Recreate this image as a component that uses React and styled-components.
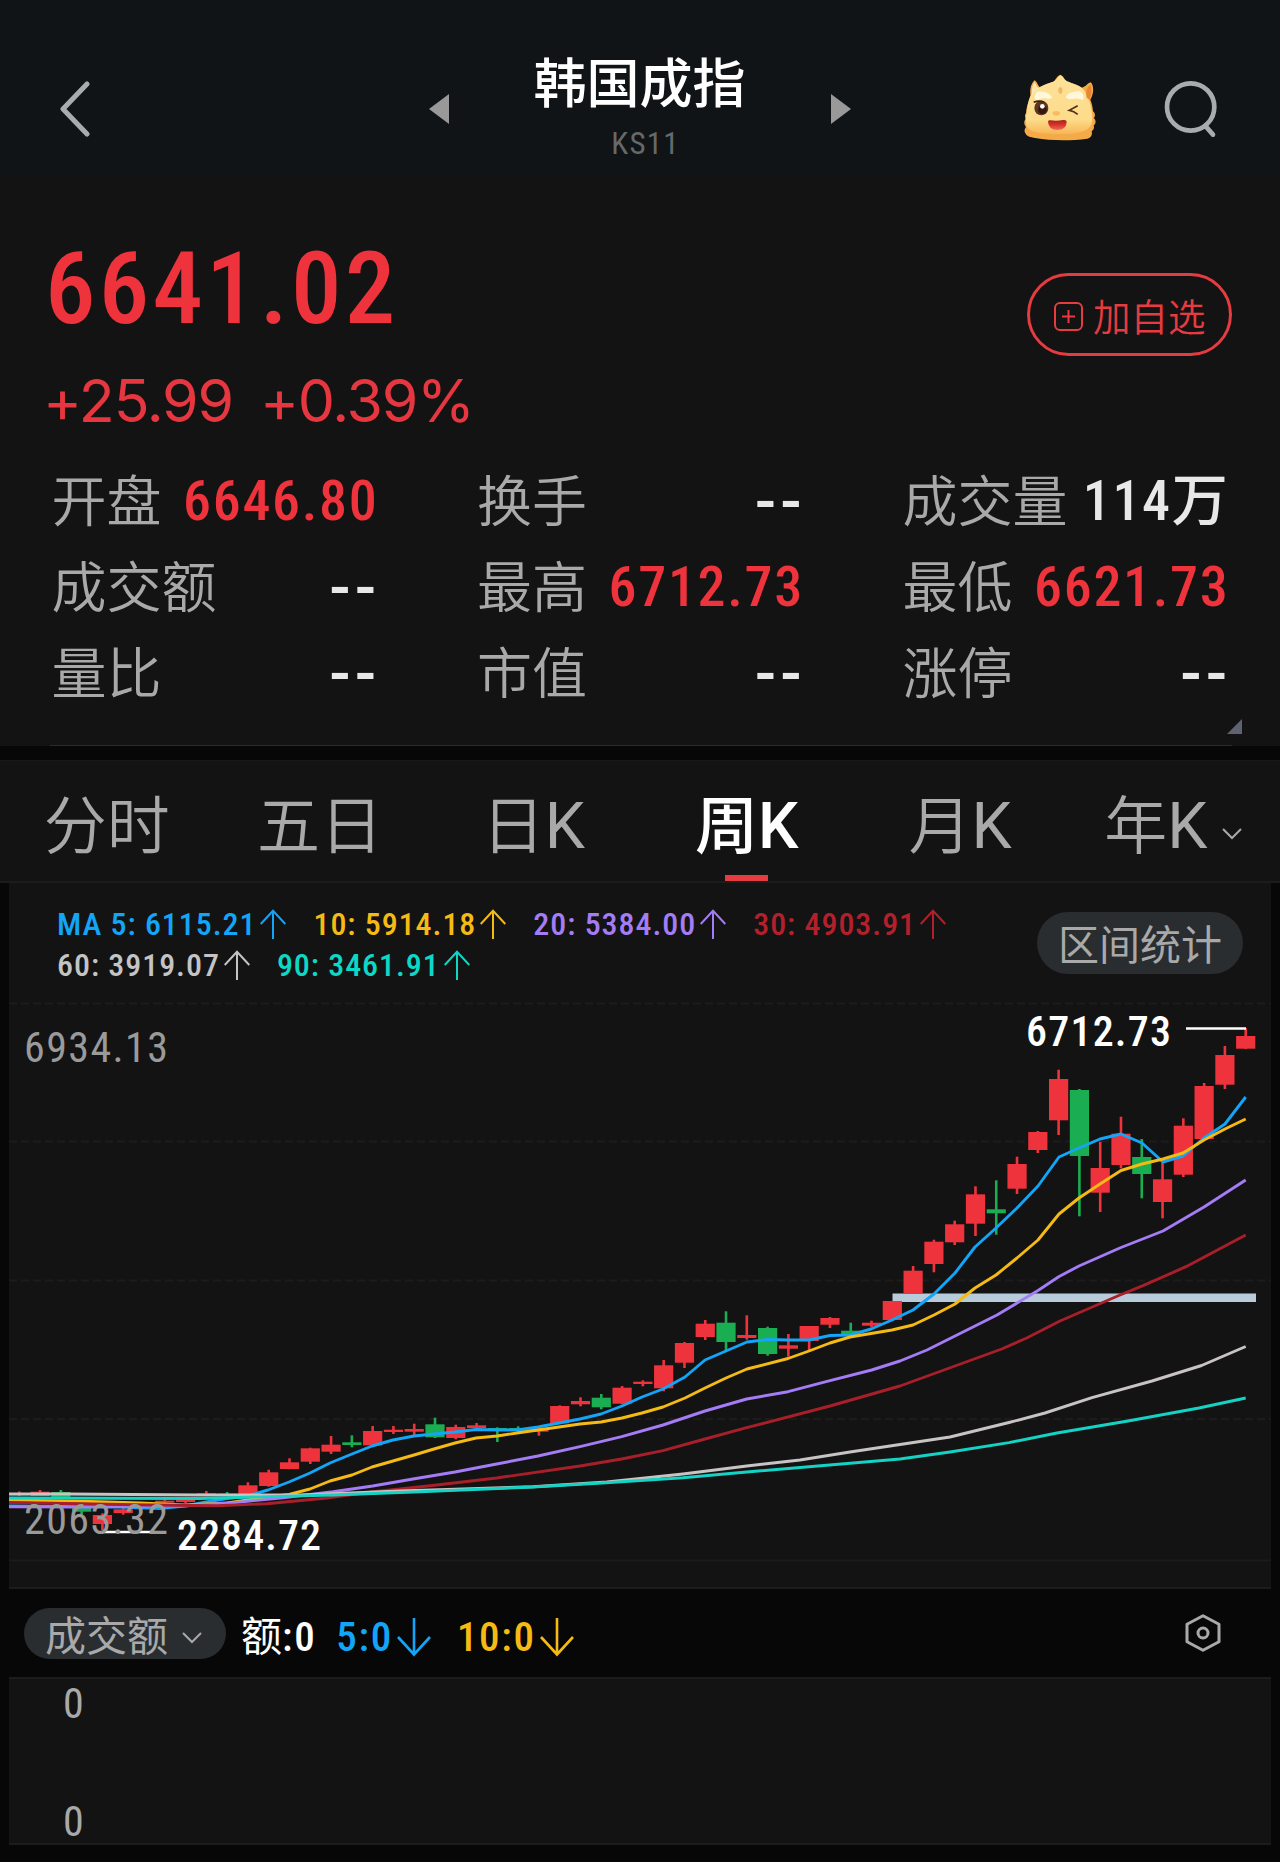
import React, { useState } from 'react';
import styled, { createGlobalStyle } from 'styled-components';

const quotes = [
  { label: '开盘', value: '6646.80', up: true },
  { label: '换手', value: '--' },
  { label: '成交量', value: '114万' },
  { label: '成交额', value: '--' },
  { label: '最高', value: '6712.73', up: true },
  { label: '最低', value: '6621.73', up: true },
  { label: '量比', value: '--' },
  { label: '市值', value: '--' },
  { label: '涨停', value: '--' },
];

const tabs = ['分时', '五日', '日K', '周K', '月K', '年K'];

const averages = [
  [
    { text: 'MA 5: 6115.21', color: '#12a5f8' },
    { text: '10: 5914.18', color: '#f5bb14' },
    { text: '20: 5384.00', color: '#a47cf6' },
    { text: '30: 4903.91', color: '#b3202b' },
  ],
  [
    { text: '60: 3919.07', color: '#c4c4c4' },
    { text: '90: 3461.91', color: '#0cd8c8' },
  ],
];

const STEP = 20.787;
const LAST_X = 1245.7;

// newest week first: [high, body top, body bottom, low, falling]
const candles = [
  [1028, 1036, 1048.7, 1049],
  [1046, 1055, 1084.7, 1089],
  [1083, 1086, 1139, 1139],
  [1118.3, 1125.7, 1174.7, 1177],
  [1161.7, 1179.3, 1202, 1218.3],
  [1139, 1157, 1174, 1198.3, 1],
  [1116.7, 1133.7, 1165, 1168.3],
  [1141.7, 1168, 1192.7, 1212],
  [1089, 1090, 1156, 1216.3, 1],
  [1069.7, 1079, 1120.3, 1135],
  [1131, 1132, 1150, 1153],
  [1156.7, 1164, 1188.7, 1194],
  [1180.3, 1209.3, 1213.3, 1234.7, 1],
  [1186.3, 1194.3, 1223.7, 1236],
  [1220.7, 1224.3, 1242.3, 1245],
  [1239.7, 1241.7, 1264, 1272.3],
  [1266, 1270.7, 1293.3, 1293.3],
  [1301, 1301, 1320, 1320.7],
  [1320.7, 1322.7, 1325.7, 1327.3],
  [1322.7, 1330.7, 1334.3, 1336, 1],
  [1317, 1318, 1324.7, 1328],
  [1326, 1326, 1341, 1351.7],
  [1334, 1345.3, 1348.7, 1356.7],
  [1326.7, 1328, 1354, 1355.7, 1],
  [1315.3, 1335, 1338, 1339.7],
  [1311.3, 1322.7, 1342, 1351, 1],
  [1320, 1323.7, 1337, 1340],
  [1342, 1343, 1362.7, 1368],
  [1360, 1365.3, 1388.3, 1391.3],
  [1380.3, 1381.7, 1384, 1386.3],
  [1386, 1387.7, 1403.7, 1404.3],
  [1394, 1397.7, 1407.3, 1409.3, 1],
  [1397.3, 1401, 1404.3, 1406.3],
  [1405.3, 1406, 1423.3, 1424],
  [1426.7, 1428.5, 1431.7, 1435.7],
  [1426.3, 1428, 1430.7, 1431.7, 1],
  [1427.3, 1428, 1430.7, 1442, 1],
  [1423, 1425.3, 1428, 1430.7],
  [1424.7, 1427, 1438, 1439.3],
  [1417.7, 1424.3, 1437.3, 1438, 1],
  [1423.7, 1429, 1431.7, 1435],
  [1426, 1429.7, 1432, 1434],
  [1426, 1431, 1445.3, 1446],
  [1435.3, 1442.3, 1445, 1447.3, 1],
  [1436, 1444.7, 1451.7, 1454],
  [1447.7, 1448.3, 1461.7, 1464],
  [1458.3, 1462.3, 1469, 1469.3],
  [1469.7, 1472.3, 1486, 1486.7],
  [1482.3, 1485.3, 1495, 1495.3],
  [1492, 1493.7, 1495.3, 1496, 1],
  [1491, 1493.3, 1495.3, 1496],
  [1497, 1499.7, 1502, 1503.3],
  [1499, 1500.7, 1502.7, 1504],
  [1505.3, 1506, 1507.7, 1508],
  [1508, 1509.3, 1513, 1514.7],
  [1513.3, 1515, 1524, 1530],
  [1505, 1506, 1511.7, 1514.7, 1],
  [1490, 1492, 1498.7, 1499.3, 1],
  [1490, 1491.7, 1496, 1496],
  [1491.5, 1493.3, 1495.3, 1496],
];

const maLines = [
  { color: '#12a5f8', points: '1245.7,1097 1225,1124 1204,1138 1183,1156 1163,1162 1142,1143 1121,1134 1100,1139 1079,1148 1059,1157 1038,1186 1017,1208 996,1228 975,1247 955,1273 934,1294 913,1310 892,1320 871,1329 850.7,1335 830,1335.5 809,1340 788,1340 767.5,1339.5 747,1342 726,1351 705,1360 685,1377 663,1389 642,1397 622,1406 601,1414 580,1419 559,1423 538,1427 517,1430 497,1430 476,1429.5 455,1432 434,1434 414,1436 393,1440 372,1446 352,1454 330,1463 310,1473 289,1482 268,1490 247,1496 227,1498.5 206,1502 185,1506 160,1508.5 120,1507 9,1506' },
  { color: '#f5bb14', points: '1245.7,1119 1225,1129 1204,1140 1183,1153 1163,1159 1142,1164 1121,1170.5 1100,1184 1079,1198 1059,1214 1038,1240 1017,1258 996,1275 975,1288 955,1304 934,1315 913,1325 892,1330 850,1337 830,1343 809,1351 788,1358.5 747,1369 726,1378 705,1388 685,1398 663,1407 642,1413 622,1418 601,1422 580,1424 559,1427 538,1430 517,1433 497,1436 476,1438 455,1443 434,1449 414,1455 393,1461 372,1467 352,1475 330,1481 310,1489 289,1494.5 268,1497 227,1503 185,1505 140,1503 90,1501.5 9,1500' },
  { color: '#a47cf6', points: '1245.7,1180 1204,1207 1163,1231 1121,1247.5 1079,1266 1058.7,1276.7 1038,1290.5 997,1315 927,1350 900,1361 871.7,1370 830,1380.7 788,1391.7 746.7,1399 705,1411 663,1425 621.7,1436.7 580,1446.7 538,1456 496.7,1464 455,1472 413,1479 372.7,1486 333,1491.7 283,1497.7 233,1502.7 187,1505.7 83,1507 9,1506.7' },
  { color: '#a81f2a', points: '1245.7,1235 1186,1266.7 1143,1285.7 1120,1295 1060,1321 1026.7,1338 1001.7,1349 900,1386 830,1406 746.7,1427.7 705,1439 663,1450.7 621.7,1459 580,1466 496.7,1478 436.7,1485 400,1489 372.7,1491.7 326.7,1498 266.7,1503.7 216.7,1505.7 150,1505 9,1502.5' },
  { color: '#c9c4c4', points: '1245.7,1346.5 1201.6,1365.5 1152,1381 1092,1397.6 1045,1413 1009,1422.5 950,1437 900,1444.5 850,1452 800,1460 746.7,1466 683,1474 606.7,1482 533,1486.7 400,1491 300,1495 200,1495 66.7,1494 9,1494' },
  { color: '#14d3c4', points: '1245.7,1398 1199,1408 1128,1421 1057,1433 1009,1442.6 950,1452 900,1459 746.7,1472 683,1477.7 606,1482.7 533,1487 420,1491.7 333,1495 200,1498.5 9,1498' },
];

function Chevron() {
  return (
    <svg width="20" height="12" viewBox="0 0 20 12" fill="none" stroke="#a9a9a9" strokeWidth="2">
      <path d="M1 1 L10 10 L19 1" />
    </svg>
  );
}

function UpArrow() {
  return (
    <svg width="26" height="30" viewBox="0 0 26 30" fill="none" stroke="currentColor" strokeWidth="2">
      <path d="M13 30 V2 M0.7 15 L13 1.7 L25.3 15" />
    </svg>
  );
}

function DownArrow() {
  return (
    <svg width="34" height="39" viewBox="0 0 34 39" fill="none" stroke="currentColor" strokeWidth="2.6">
      <path d="M17 0 V36 M1 19 L17 36.5 L33 19" />
    </svg>
  );
}

function Mascot() {
  return (
    <MascotIcon width="71.7" height="66.7" viewBox="72 72 215 200">
      <defs>
        <linearGradient id="skin" x1="0" y1="0" x2="0" y2="1">
          <stop offset="0" stopColor="#fde29a" />
          <stop offset="0.75" stopColor="#fddc8a" />
          <stop offset="1" stopColor="#f7b658" />
        </linearGradient>
        <linearGradient id="mouth" x1="0" y1="0" x2="0" y2="1">
          <stop offset="0" stopColor="#a8201c" />
          <stop offset="0.5" stopColor="#d8352b" />
          <stop offset="1" stopColor="#f2695a" />
        </linearGradient>
      </defs>
      <path
        d="M78 190 C80 165 88 150 92 138 C88 120 94 98 104 91 C112 96 114 108 120 112 C134 102 148 98 160 96 C166 90 172 76 181 74 C190 76 194 90 202 97 C218 99 232 105 246 113 C258 110 262 100 272 97 C282 106 282 132 271 149 C276 162 278 170 279 184 C287 190 286 200 281 204 C289 210 288 222 281 226 C284 236 279 240 275 244 C278 256 272 264 262 266 C210 273 150 272 106 264 C92 262 78 258 76 249 C71 243 75 236 78 231 C71 222 71 212 78 207 C74 200 74 194 78 190 Z"
        fill="#f5aa48"
      />
      <path
        d="M80 190 C84 150 92 120 118 112 C145 97 165 98 172 84 Q181 69 190 84 C198 98 232 100 249 117 C268 140 276 175 277 205 C278 242 245 252 180 252 C116 252 78 246 78 218 Q74 205 80 190 Z"
        fill="url(#skin)"
      />
      <path d="M95 138 Q94 106 104 96 Q112 112 116 116 Z" fill="#fbe5ae" />
      <path d="M260 143 Q254 116 271 104 Q280 124 268 149 Z" fill="#e9862f" />
      <path d="M175 116 Q181 106 187 116 Q190 128 181 132 Q173 128 175 116 Z" fill="#efb766" />
      <path d="M104 140 Q109 119 126 125 Q148 127 157 142 Q151 150 138 145 Q121 143 112 151 Q103 150 104 140 Z" fill="#fff7dc" />
      <path d="M197 142 Q206 125 222 127 Q238 117 248 131 Q254 145 247 150 Q231 143 216 147 Q202 149 197 142 Z" fill="#fff7dc" />
      <ellipse cx="124" cy="174" rx="21" ry="22" fill="#5d3422" />
      <path d="M101 157 Q116 150 132 156" fill="none" stroke="#3b2016" strokeWidth="5" />
      <ellipse cx="127" cy="179" rx="13" ry="13" fill="#35170f" />
      <circle cx="127" cy="169" r="7" fill="#fffdf3" />
      <path d="M233 167 L208 181 Q222 183 233 193" fill="none" stroke="#50301c" strokeWidth="5" />
      <ellipse cx="169" cy="190" rx="11" ry="7" fill="#f8bb61" />
      <path d="M144 215 Q144 209 151 211 Q170 214 190 210 Q200 209 200 217 Q198 240 172 240 Q146 240 144 215 Z" fill="url(#mouth)" />
    </MascotIcon>
  );
}

function KLineChart() {
  return (
    <Plot viewBox="9 990 1262 597">
      <g stroke="#1c1c1c" strokeWidth="2" strokeDasharray="8 4">
        <path d="M9 1003.5 H1271 M9 1141.5 H1271 M9 1280.5 H1271 M9 1419 H1271" />
      </g>
      <path d="M9 1560.5 H1271" stroke="#1b1b1b" strokeWidth="2" />
      <rect x="892.5" y="1293.5" width="363.5" height="8.5" fill="#b7cbdb" />
      {candles.map(([high, top, bottom, low, falling], i) => {
        const x = LAST_X - i * STEP;
        return (
          <g key={i} fill={falling ? '#1aad52' : '#ee333c'}>
            <rect x={x - 1.3} y={high} width="2.6" height={low - high} />
            <rect x={x - 9.6} y={top} width="19.2" height={bottom - top} />
          </g>
        );
      })}
      {maLines.map((line) => (
        <polyline
          key={line.color}
          points={line.points}
          fill="none"
          stroke={line.color}
          strokeWidth="2.9"
          strokeLinejoin="round"
        />
      ))}
      <path d="M1186 1028.5 H1246 M103 1532 H151" stroke="#fff" strokeWidth="2.7" />
      <AxisText x="24" y="1061.5" textLength="144">6934.13</AxisText>
      <AxisText x="24" y="1534" textLength="144">2063.32</AxisText>
      <AxisText $bright x="177" y="1550" textLength="144">2284.72</AxisText>
      <AxisText $bright x="1026" y="1045.5" textLength="145">6712.73</AxisText>
    </Plot>
  );
}

function App() {
  const [activeTab, setActiveTab] = useState('周K');

  return (
    <Page>
      <GlobalStyle />

      <Header>
        <svg width="30" height="56" viewBox="0 0 30 56" fill="none" stroke="#a9acae" strokeWidth="5" strokeLinecap="round" strokeLinejoin="round">
          <path d="M27 3 L3 28 L27 53" />
        </svg>
        <svg width="20" height="30" viewBox="0 0 20 30" fill="#999">
          <path d="M20 0 V30 L0 15 Z" />
        </svg>
        <TitleBlock>
          <h1>韩国成指</h1>
          <span>KS11</span>
        </TitleBlock>
        <svg width="20" height="30" viewBox="0 0 20 30" fill="#999">
          <path d="M0 0 V30 L20 15 Z" />
        </svg>
        <Mascot />
        <svg width="55" height="58.3" viewBox="490 90 165 175" fill="none" stroke="#a9acae" strokeWidth="14" strokeLinecap="round">
          <circle cx="573" cy="171" r="71" />
          <path d="M619 230 L640 254" />
        </svg>
      </Header>

      <Summary>
        <PriceRow>
          <div>
            <Price>6641.02</Price>
            <Change>
              <span>+25.99</span>
              <span>+0.39%</span>
            </Change>
          </div>
          <WatchButton>
            <svg width="29" height="29" viewBox="0 0 29 29" fill="none" stroke="currentColor" strokeWidth="2">
              <rect x="1" y="1" width="27" height="27" rx="5" />
              <path d="M8 14.5 H21 M14.5 8 V21" />
            </svg>
            加自选
          </WatchButton>
        </PriceRow>

        <QuoteGrid>
          {quotes.map((q) => (
            <Quote key={q.label}>
              <QuoteLabel>{q.label}</QuoteLabel>
              {q.value === '--' ? (
                <EmptyValue>--</EmptyValue>
              ) : (
                <QuoteValue $up={q.up}>{q.value}</QuoteValue>
              )}
            </Quote>
          ))}
        </QuoteGrid>
        <Corner width="15" height="15" viewBox="0 0 15 15">
          <path d="M15 0 V15 H0 Z" fill="#5f6273" />
        </Corner>
        <Rule />
      </Summary>

      <TabBar>
        {tabs.map((tab) => (
          <Tab key={tab} $active={tab === activeTab} onClick={() => setActiveTab(tab)}>
            <span>
              {tab.replace('K', '')}
              {tab.endsWith('K') && <TabLatin $active={tab === activeTab}>K</TabLatin>}
            </span>
            {tab === '年K' && <Chevron />}
          </Tab>
        ))}
      </TabBar>

      <ChartPanel>
        <ChartHead>
          <div>
            {averages.map((row, i) => (
              <AverageRow key={i}>
                {row.map((ma) => (
                  <Average key={ma.text} $color={ma.color}>
                    {ma.text}
                    <UpArrow />
                  </Average>
                ))}
              </AverageRow>
            ))}
          </div>
          <RangeButton>区间统计</RangeButton>
        </ChartHead>
        <KLineChart />
      </ChartPanel>

      <IndicatorBar>
        <IndicatorPicker>
          成交额
          <Chevron />
        </IndicatorPicker>
        <Indicator $color="#fff" $gap={15}>
          <span>额<Latin>:0</Latin></span>
        </Indicator>
        <Indicator $color="#12a5f8" $gap={20}>
          <Latin>5:0</Latin>
          <DownArrow />
        </Indicator>
        <Indicator $color="#f5bb14" $gap={26}>
          <Latin>10:0</Latin>
          <DownArrow />
        </Indicator>
        <Settings width="36" height="38" viewBox="0 0 36 38" fill="none" stroke="#a9a9a9" strokeWidth="3">
          <path d="M18 1.8 L34 10.3 V27.7 L18 36.2 L2 27.7 V10.3 Z" strokeLinejoin="round" />
          <circle cx="18" cy="19" r="5" />
        </Settings>
      </IndicatorBar>

      <VolumePanel>
        <span>0</span>
        <span>0</span>
      </VolumePanel>
    </Page>
  );
}
export default App;

const GlobalStyle = createGlobalStyle`
  body {
    margin: 0;
    background: #070707;
  }

  * {
    box-sizing: border-box;
  }

  svg {
    display: block;
    flex-shrink: 0;
  }

  button {
    margin: 0;
    padding: 0;
    border: 0;
    background: none;
    font-family: inherit;
    font-stretch: inherit;
  }
`;

const Page = styled.div`
  display: flex;
  flex-direction: column;
  width: 1280px;
  height: 1862px;
  overflow: hidden;
  background: #070707;
  color: #a9a9a9;
  font-family: Roboto, 'Noto Sans CJK SC', sans-serif;
  font-stretch: 75%;
  white-space: nowrap;
`;

const Latin = styled.span`
  font-weight: 500;
  letter-spacing: 1.7px;
`;

const TabLatin = styled.span`
  font-size: 64px;
  font-weight: ${(p) => (p.$active ? 500 : 400)};
  font-stretch: 100%;
`;

const Header = styled.header`
  display: grid;
  grid-template-columns: 369px 20px 382px 193px 139px 55px;
  align-items: center;
  height: 176px;
  padding: 42px 0 0 60px;
  background: #101416;
`;

const MascotIcon = styled.svg`
  margin-top: -3px;
`;

const TitleBlock = styled.div`
  display: flex;
  flex-direction: column;
  align-items: center;
  width: 393px;
  margin-top: -1px;

  h1 {
    margin: 2px 12px 0 0;
    font-size: 53px;
    line-height: 60px;
    font-weight: 500;
    color: #fff;
  }

  span {
    font-size: 31px;
    line-height: 40px;
    margin-top: 9px;
    letter-spacing: 1.2px;
    color: #66696b;
  }
`;

const Summary = styled.section`
  display: flex;
  flex-direction: column;
  height: 570px;
  padding-top: 63px;
  background: #131313;
`;

const PriceRow = styled.div`
  display: flex;
  justify-content: space-between;
  align-items: flex-start;
  height: 218px;
  padding: 0 48px 0 45px;
`;

const Price = styled.div`
  font-size: 101px;
  line-height: 100px;
  font-weight: 500;
  letter-spacing: 3.2px;
  color: #ee333c;
`;

const Change = styled.div`
  display: flex;
  gap: 27px;
  margin: 27px 0 0 -2px;
  font-family: Inter, 'Liberation Sans', sans-serif;
  font-size: 59px;
  line-height: 70px;
  letter-spacing: -1.2px;
  color: #e6363f;
`;

const WatchButton = styled.button`
  display: flex;
  align-items: center;
  gap: 10px;
  width: 205px;
  height: 83px;
  margin-top: 34px;
  padding-left: 24px;
  border: 3px solid #e63b40;
  border-radius: 42px;
  color: #e63b40;
  font-size: 37.5px;
  font-weight: 350;

  svg {
    margin-top: 4px;
  }
`;

const QuoteGrid = styled.div`
  display: grid;
  grid-template-columns: repeat(3, 323px);
  column-gap: 102.5px;
  grid-auto-rows: 86.4px;
  padding-left: 52px;
`;

const Quote = styled.div`
  display: flex;
  justify-content: space-between;
  align-items: center;
  line-height: 64px;
`;

const QuoteLabel = styled.span`
  padding-top: 3px;
  margin-left: -0.5px;
  font-size: 55px;
  font-weight: 350;
`;

const QuoteValue = styled.span`
  font-size: 56px;
  font-weight: 500;
  letter-spacing: 1.7px;
  margin-right: -3.5px;
  padding-top: 1px;
  color: ${(p) => (p.$up ? '#ee333c' : '#e8e8e8')};
`;

const EmptyValue = styled.span`
  margin-right: -5px;
  padding-top: 3px;
  font-size: 60px;
  font-weight: 600;
  font-stretch: 100%;
  letter-spacing: 3.5px;
  color: #e8e8e8;
`;

const Corner = styled.svg`
  margin: 3px 38px 0 auto;
`;

const Rule = styled.div`
  height: 1px;
  margin: auto 48px 0 50px;
  background: #2b2b2b;
`;

const TabBar = styled.nav`
  display: grid;
  grid-template-columns: repeat(6, 1fr);
  height: 123px;
  margin-top: 14px;
  border-top: 1px solid #181818;
  border-bottom: 2px solid #1c1c1c;
  background: #131313;
`;

const Tab = styled.button`
  position: relative;
  display: flex;
  justify-content: center;
  align-items: center;
  gap: 15px;
  padding-top: 11px;
  font-size: 63px;
  line-height: 74px;
  font-weight: ${(p) => (p.$active ? 500 : 350)};
  color: ${(p) => (p.$active ? '#fff' : '#a9a9a9')};

  svg {
    margin-top: 15px;
  }

  &::after {
    content: '';
    position: absolute;
    bottom: 0;
    left: calc(50% - 22px);
    width: 43px;
    height: 6px;
    background: ${(p) => (p.$active ? '#e63b40' : 'transparent')};
  }
`;

const ChartPanel = styled.section`
  height: 706px;
  margin: 0 9px;
  border-bottom: 2px solid #1c1c1c;
  background: #131313;
`;

const ChartHead = styled.div`
  display: flex;
  justify-content: space-between;
  align-items: flex-start;
  height: 107px;
  padding: 22px 28px 0 48px;
`;

const AverageRow = styled.div`
  display: flex;
  gap: 27px;
  height: 41px;
`;

const Average = styled.span`
  display: flex;
  align-items: center;
  gap: 4px;
  font-size: 32px;
  font-weight: 500;
  letter-spacing: 0.95px;
  line-height: 36px;
  height: 38px;
  color: ${(p) => p.$color};
`;

const RangeButton = styled.button`
  width: 206px;
  height: 62px;
  margin-top: 7px;
  padding-top: 6px;
  border-radius: 31px;
  background: #292d30;
  color: #a9a9a9;
  font-size: 41px;
  line-height: 56px;
`;

const Plot = styled.svg`
  width: 1262px;
  height: 597px;
`;

const AxisText = styled.text`
  font-size: 42px;
  font-weight: ${(p) => (p.$bright ? 500 : 450)};
  fill: ${(p) => (p.$bright ? '#fff' : '#9a9a9a')};
`;

const IndicatorBar = styled.div`
  display: flex;
  align-items: center;
  height: 88px;
  padding: 0 0 0 24px;
`;

const IndicatorPicker = styled.button`
  display: flex;
  align-items: center;
  gap: 14px;
  width: 202px;
  height: 51px;
  padding-left: 21px;
  border-radius: 26px;
  background: #292d30;
  color: #a9a9a9;
  font-size: 41px;

  svg {
    margin-top: 9px;
  }
`;

const Indicator = styled.span`
  display: flex;
  align-items: center;
  gap: 4px;
  margin-left: ${(p) => p.$gap}px;
  padding-top: 8px;
  font-size: 41px;
  line-height: 48px;
  color: ${(p) => p.$color};
`;

const Settings = styled.svg`
  margin: 0 59px 0 auto;
`;

const VolumePanel = styled.section`
  display: flex;
  flex-direction: column;
  justify-content: space-between;
  height: 168px;
  margin: 0 9px;
  padding: 4px 54px 0;
  border-top: 2px solid #1c1c1c;
  border-bottom: 2px solid #1c1c1c;
  background: #131313;
  font-size: 42px;
  font-weight: 450;
  line-height: 42px;
`;
